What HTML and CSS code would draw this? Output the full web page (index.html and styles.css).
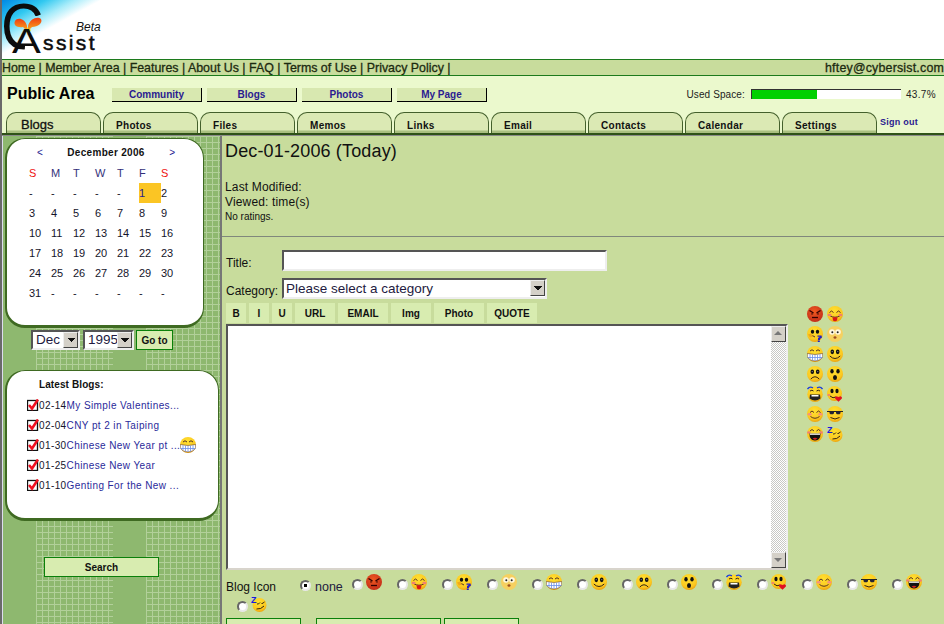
FILE: index.html
```html
<!DOCTYPE html>
<html lang="en">
<head>
    <meta charset="UTF-8">
    <meta name="viewport" content="width=device-width, initial-scale=1.0">
    <title>Assist - Blogs</title>
    <link rel="stylesheet" href="styles.css">
</head>
<body>
    <!-- smiley set, reused all over the page -->
    <svg class="defs" width="0" height="0" aria-hidden="true">
        <defs>
            <radialGradient id="skin" cx="45%" cy="30%" r="75%">
                <stop offset="0" stop-color="#ffe030"/>
                <stop offset=".7" stop-color="#fbc820"/>
                <stop offset="1" stop-color="#e89808"/>
            </radialGradient>
            <radialGradient id="skinRed" cx="45%" cy="35%" r="70%">
                <stop offset="0" stop-color="#f05a20"/>
                <stop offset="1" stop-color="#c02a18"/>
            </radialGradient>
            <symbol id="s-angry" viewBox="0 0 16 16">
                <circle cx="8" cy="8" r="8" fill="url(#skinRed)"/>
                <path d="M2.500 4.500l4 2.500M13.500 4.500l-4 2.500" stroke="#300" stroke-width="1.400" fill="none"/>
                <path d="M4.500 7l2 1-2 .8zM11.500 7l-2 1 2 .8z" fill="#200"/>
                <path d="M5 11.500h6" stroke="#300" stroke-width="1.300"/>
            </symbol>
            <symbol id="s-tongue" viewBox="0 0 16 16">
                <circle cx="8" cy="8" r="8" fill="url(#skin)"/>
                <path d="M2.500 6.500q2-3 4 0M9.500 6.500q2-3 4 0" stroke="#532" fill="none"/>
                <path d="M2.500 9.500q5.500 3.500 11 0" stroke="#532" fill="none"/>
                <ellipse cx="2.600" cy="9" rx="2" ry="1.300" fill="#f08070"/>
                <ellipse cx="13.400" cy="9" rx="2" ry="1.300" fill="#f08070"/>
                <path d="M5.500 11.200h5l-.5 3.300q-2 1.400-4 0z" fill="#d81818"/>
            </symbol>
            <symbol id="s-question" viewBox="0 0 16 16">
                <circle cx="8" cy="8" r="8" fill="url(#skin)"/>
                <ellipse cx="5.500" cy="5.800" rx="1.700" ry="2" fill="#111"/>
                <ellipse cx="10.500" cy="5.800" rx="1.700" ry="2" fill="#111"/>
                <path d="M3 10q3-1 5 1" stroke="#532" fill="none"/>
                <path d="M1 8.500l3-1 2 3-3 1z" fill="#f0a818"/>
                <path d="M10.500 9.500h4l.5 2-2 1.500v1h-2v-2l2-1.300h-2.500z M10.800 14.500h2v1.500h-2z" fill="#2020c8"/>
            </symbol>
            <symbol id="s-shock" viewBox="0 0 16 16">
                <circle cx="8" cy="8" r="8" fill="#f6d060"/>
                <circle cx="5" cy="6" r="2.800" fill="#fff8e0"/>
                <circle cx="11" cy="6" r="2.800" fill="#fff8e0"/>
                <circle cx="5.300" cy="6.300" r="1" fill="#222"/>
                <circle cx="10.700" cy="6.300" r="1" fill="#222"/>
                <ellipse cx="8" cy="11.500" rx="1.500" ry="1.200" fill="#a05020"/>
            </symbol>
            <symbol id="s-grin" viewBox="0 0 16 16">
                <circle cx="8" cy="8" r="8" fill="url(#skin)"/>
                <path d="M3 5q2-2.500 4 0M9 5q2-2.500 4 0" stroke="#532" fill="none"/>
                <path d="M.3 7.500q7.700 2 15.400 0v3q-1.500 4-7.700 4.500-6.200-.5-7.700-4.500z" fill="#fff" stroke="#643" stroke-width=".6"/>
                <path d="M3 8.200v5M5.500 8.700v5.800M8 9v6M10.500 8.700v5.800M13 8.200v5M.6 11.500h14.800" stroke="#6a8ee8" stroke-width=".8"/>
            </symbol>
            <symbol id="s-smile" viewBox="0 0 16 16">
                <circle cx="8" cy="8" r="8" fill="url(#skin)"/>
                <ellipse cx="5.300" cy="5.800" rx="1.800" ry="2.400" fill="#111"/>
                <ellipse cx="10.700" cy="5.800" rx="1.800" ry="2.400" fill="#111"/>
                <path d="M4.600 5.600h1.400M10 5.600h1.400" stroke="#889" stroke-width=".8"/>
                <path d="M2.800 10q5.200 5 10.400 0" stroke="#321" stroke-width="1" fill="none"/>
            </symbol>
            <symbol id="s-sad" viewBox="0 0 16 16">
                <circle cx="8" cy="8" r="8" fill="url(#skin)"/>
                <ellipse cx="5.300" cy="5.800" rx="1.800" ry="2.300" fill="#111"/>
                <ellipse cx="10.700" cy="5.800" rx="1.800" ry="2.300" fill="#111"/>
                <path d="M4.600 5.600h1.400M10 5.600h1.400" stroke="#889" stroke-width=".8"/>
                <path d="M3.800 13q4.200-4.500 8.400 0" stroke="#321" stroke-width="1" fill="none"/>
            </symbol>
            <symbol id="s-wow" viewBox="0 0 16 16">
                <circle cx="8" cy="8" r="8" fill="url(#skin)"/>
                <ellipse cx="5" cy="5.300" rx="1.700" ry="2.300" fill="#111"/>
                <ellipse cx="11" cy="5.300" rx="1.700" ry="2.300" fill="#111"/>
                <ellipse cx="8" cy="11.500" rx="2" ry="2.500" fill="#111"/>
            </symbol>
            <symbol id="s-cry" viewBox="0 0 16 16">
                <circle cx="8" cy="8.300" r="7.700" fill="url(#skin)"/>
                <path d="M.5 3q2-3 5.500-1.200M15.500 3q-2-3-5.500-1.200" stroke="#2040d8" stroke-width="1.400" fill="none"/>
                <path d="M3 5q2-1.500 3.500 0M9.500 5q2-1.500 3.500 0" stroke="#321" fill="none"/>
                <path d="M3 8.500h10l.5 4q-5.500 4-11 0z" fill="#222"/>
                <path d="M4.500 9h7v1.500h-7z" fill="#fff"/>
            </symbol>
            <symbol id="s-kiss" viewBox="0 0 16 16">
                <circle cx="7.500" cy="7.500" r="7.500" fill="url(#skin)"/>
                <ellipse cx="5" cy="5" rx="1.600" ry="2.200" fill="#111"/>
                <ellipse cx="10" cy="5" rx="1.600" ry="2.200" fill="#111"/>
                <path d="M3 10q3 3 6 1" stroke="#321" fill="none"/>
                <ellipse cx="1.800" cy="9" rx="1.500" ry="1" fill="#f08070"/>
                <path d="M11.500 15.800l-3.400-3.300q-.6-2 1.400-2.300l2 .8 2-.8q2 .3 1.400 2.300z" fill="#e01020"/>
            </symbol>
            <symbol id="s-blush" viewBox="0 0 16 16">
                <circle cx="8" cy="8" r="8" fill="url(#skin)"/>
                <path d="M3 6.500q2-3 4 0M9.500 6.500q2-3 4 0" stroke="#532" fill="none"/>
                <ellipse cx="2.600" cy="8.200" rx="2" ry="1.300" fill="#f59080"/>
                <ellipse cx="13.400" cy="8.200" rx="2" ry="1.300" fill="#f59080"/>
                <path d="M3.500 10.500q4.500 3.500 9 0" stroke="#532" fill="none"/>
            </symbol>
            <symbol id="s-cool" viewBox="0 0 16 16">
                <circle cx="8" cy="8" r="8" fill="url(#skin)"/>
                <path d="M0 5.500h16" stroke="#222" stroke-width="1"/>
                <path d="M2.500 5.500h4.500v1.800l-1 1h-2.500l-1-1zM9 5.500h4.500v1.800l-1 1h-2.500l-1-1z" fill="#223"/>
                <path d="M3.500 11.500q4.500 3 9 0" stroke="#321" fill="none"/>
            </symbol>
            <symbol id="s-laugh" viewBox="0 0 16 16">
                <circle cx="8" cy="8" r="8" fill="url(#skin)"/>
                <path d="M3 5q2-3 4 0M9.500 5q2-3 4 0" stroke="#532" fill="none"/>
                <ellipse cx="1.800" cy="6.500" rx="1.700" ry="1.200" fill="#f08070"/>
                <ellipse cx="14.200" cy="6.500" rx="1.700" ry="1.200" fill="#f08070"/>
                <path d="M2.500 7.500h11l-.3 3.500q-1.700 3.500-5.200 3.500t-5.200-3.500z" fill="#111"/>
                <path d="M3 7.500h10v1.300h-10z" fill="#fff"/>
                <path d="M5.500 12.500q2.500-1.500 5 0l-2.500 1.500z" fill="#d02020"/>
            </symbol>
            <symbol id="s-sleep" viewBox="0 0 16 16">
                <circle cx="8.500" cy="9" r="7" fill="url(#skin)"/>
                <path d="M6 8q1.800 .5 3-1.500M10.500 7.500q1.800 .3 3-1.800M5.500 13q4.500 .5 7.500-3" stroke="#321" fill="none"/>
                <text x="0" y="7" class="zed">Z</text>
            </symbol>
        </defs>
    </svg>

    <div class="page">
        <header class="top">
            <svg class="logo" width="108" height="59" viewBox="0 0 108 59" role="img" aria-label="Assist Beta">
                <defs>
                    <linearGradient id="sky" x1="0" y1="0" x2="1" y2="1">
                        <stop offset="0" stop-color="#0088e4"/>
                        <stop offset=".2" stop-color="#30c8f0"/>
                        <stop offset=".34" stop-color="#a8ecfa"/>
                        <stop offset=".46" stop-color="#fff"/>
                    </linearGradient>
                    <linearGradient id="wing" x1="0" y1="0" x2="0" y2="1">
                        <stop offset="0" stop-color="#ee3a10"/>
                        <stop offset="1" stop-color="#fbb020"/>
                    </linearGradient>
                    <clipPath id="openC">
                        <path d="M0 0H50V16H24V34L22 59H0z"/>
                    </clipPath>
                </defs>
                <rect x="0" y="0" width="108" height="59" fill="url(#sky)"/>
                <path d="M23 30l3-3 3 3-3 5z" fill="#f8e020"/>
                <path d="M25 31l-4-4c-6 1-10-2-8-6 2-4 10-3 12 5z" fill="url(#wing)"/>
                <path d="M26 31l4-4c6 0 11-4 9-8-3-3-11-1-13 7z" fill="url(#wing)"/>
                <g clip-path="url(#openC)">
                    <text class="logo-c" transform="translate(-1 49) scale(.92 1)">C</text>
                </g>
                <text class="logo-a" transform="translate(10 53) scale(1.2 1)">A</text>
                <text class="logo-rest" x="41" y="50">ssist</text>
                <text class="logo-beta" x="74" y="31">Beta</text>
            </svg>
        </header>

        <nav class="site-nav">
            <span>Home | Member Area | Features | About Us | FAQ | Terms of Use | Privacy Policy |</span>
            <span class="user-mail">hftey@cybersist.com</span>
        </nav>

        <div class="area-bar">
            <h1>Public Area</h1>
            <a class="area-link" href="#">Community</a>
            <a class="area-link" href="#">Blogs</a>
            <a class="area-link" href="#">Photos</a>
            <a class="area-link" href="#">My Page</a>
            <div class="space">
                <span class="space-label">Used Space:</span>
                <div class="space-bar"><div class="space-fill" style="width: 43.7%"></div></div>
                <span class="space-pct">43.7%</span>
            </div>
        </div>

        <div class="tabs">
            <a class="tab tab-active" href="#">Blogs</a>
            <a class="tab" href="#">Photos</a>
            <a class="tab" href="#">Files</a>
            <a class="tab" href="#">Memos</a>
            <a class="tab" href="#">Links</a>
            <a class="tab" href="#">Email</a>
            <a class="tab" href="#">Contacts</a>
            <a class="tab" href="#">Calendar</a>
            <a class="tab" href="#">Settings</a>
            <a class="signout" href="#">Sign out</a>
        </div>

        <div class="columns">
            <aside class="sidebar">
                <section class="card calendar">
                    <div class="cal-head">
                        <span>&lt;</span>
                        <strong>December 2006</strong>
                        <span>&gt;</span>
                    </div>
                    <div class="cal-grid">
                        <span class="dow red">S</span><span class="dow">M</span><span class="dow">T</span><span class="dow">W</span><span class="dow">T</span><span class="dow">F</span><span class="dow red">S</span>
                        <span>-</span><span>-</span><span>-</span><span>-</span><span>-</span><span class="today">1</span><span>2</span>
                        <span>3</span><span>4</span><span>5</span><span>6</span><span>7</span><span>8</span><span>9</span>
                        <span>10</span><span>11</span><span>12</span><span>13</span><span>14</span><span>15</span><span>16</span>
                        <span>17</span><span>18</span><span>19</span><span>20</span><span>21</span><span>22</span><span>23</span>
                        <span>24</span><span>25</span><span>26</span><span>27</span><span>28</span><span>29</span><span>30</span>
                        <span>31</span><span>-</span><span>-</span><span>-</span><span>-</span><span>-</span><span>-</span>
                    </div>
                </section>

                <form class="goto">
                    <span class="combo combo-month"><select><option>Dec</option></select></span>
                    <span class="combo combo-year"><select><option>1995</option></select></span>
                    <button class="btn goto-btn" type="button">Go to</button>
                </form>

                <section class="card latest">
                    <h3>Latest Blogs:</h3>
                    <ul>
                        <li><svg class="check" viewBox="0 0 12 12"><rect x=".5" y="1.500" width="10" height="10" fill="#fff" stroke="#111" stroke-width="1.300"/><path d="M2 6l3 3.500 6-9" stroke="#f01020" stroke-width="2.600" fill="none"/></svg><span class="date">02-14</span><a href="#">My Simple Valentines...</a></li>
                        <li><svg class="check" viewBox="0 0 12 12"><rect x=".5" y="1.500" width="10" height="10" fill="#fff" stroke="#111" stroke-width="1.300"/><path d="M2 6l3 3.500 6-9" stroke="#f01020" stroke-width="2.600" fill="none"/></svg><span class="date">02-04</span><a href="#">CNY pt 2 in Taiping</a></li>
                        <li><svg class="check" viewBox="0 0 12 12"><rect x=".5" y="1.500" width="10" height="10" fill="#fff" stroke="#111" stroke-width="1.300"/><path d="M2 6l3 3.500 6-9" stroke="#f01020" stroke-width="2.600" fill="none"/></svg><span class="date">01-30</span><a href="#">Chinese New Year pt ...</a><svg class="smile"><use href="#s-grin"/></svg></li>
                        <li><svg class="check" viewBox="0 0 12 12"><rect x=".5" y="1.500" width="10" height="10" fill="#fff" stroke="#111" stroke-width="1.300"/><path d="M2 6l3 3.500 6-9" stroke="#f01020" stroke-width="2.600" fill="none"/></svg><span class="date">01-25</span><a href="#">Chinese New Year</a></li>
                        <li><svg class="check" viewBox="0 0 12 12"><rect x=".5" y="1.500" width="10" height="10" fill="#fff" stroke="#111" stroke-width="1.300"/><path d="M2 6l3 3.500 6-9" stroke="#f01020" stroke-width="2.600" fill="none"/></svg><span class="date">01-10</span><a href="#">Genting For the New ...</a></li>
                    </ul>
                </section>

                <button class="btn search-btn" type="button">Search</button>
            </aside>

            <main class="content">
                <div class="entry-info">
                    <h2>Dec-01-2006 (Today)</h2>
                    <p class="meta">Last Modified:<br>Viewed: time(s)</p>
                    <p class="ratings">No ratings.</p>
                </div>

                <form class="entry-form">
                    <div class="field field-title">
                        <label for="title">Title:</label>
                        <input id="title" type="text">
                    </div>
                    <div class="field field-cat">
                        <label for="category">Category:</label>
                        <span class="combo combo-cat"><select id="category"><option>Please select a category</option></select></span>
                    </div>

                    <div class="toolbar">
                        <button type="button" class="tool tool-s">B</button>
                        <button type="button" class="tool tool-s">I</button>
                        <button type="button" class="tool tool-s">U</button>
                        <button type="button" class="tool">URL</button>
                        <button type="button" class="tool tool-l">EMAIL</button>
                        <button type="button" class="tool">Img</button>
                        <button type="button" class="tool tool-l">Photo</button>
                        <button type="button" class="tool tool-l">QUOTE</button>
                    </div>

                    <div class="editor-row">
                        <div class="editor">
                            <textarea aria-label="Blog text"></textarea>
                            <div class="scrollbar">
                                <span class="scroll-btn scroll-up"></span>
                                <span class="scroll-track"></span>
                                <span class="scroll-btn scroll-down"></span>
                            </div>
                        </div>
                        <div class="smileys">
                            <svg class="smile"><use href="#s-angry"/></svg><svg class="smile"><use href="#s-tongue"/></svg>
                            <svg class="smile"><use href="#s-question"/></svg><svg class="smile"><use href="#s-shock"/></svg>
                            <svg class="smile"><use href="#s-grin"/></svg><svg class="smile"><use href="#s-smile"/></svg>
                            <svg class="smile"><use href="#s-sad"/></svg><svg class="smile"><use href="#s-wow"/></svg>
                            <svg class="smile"><use href="#s-cry"/></svg><svg class="smile"><use href="#s-kiss"/></svg>
                            <svg class="smile"><use href="#s-blush"/></svg><svg class="smile"><use href="#s-cool"/></svg>
                            <svg class="smile"><use href="#s-laugh"/></svg><svg class="smile"><use href="#s-sleep"/></svg>
                        </div>
                    </div>

                    <div class="icon-pick">
                        <span class="icon-label">Blog Icon</span>
                        <label class="pick pick-none"><input type="radio" name="icon" checked> none</label>
                        <label class="pick"><input type="radio" name="icon"><svg class="smile"><use href="#s-angry"/></svg></label>
                        <label class="pick"><input type="radio" name="icon"><svg class="smile"><use href="#s-tongue"/></svg></label>
                        <label class="pick"><input type="radio" name="icon"><svg class="smile"><use href="#s-question"/></svg></label>
                        <label class="pick"><input type="radio" name="icon"><svg class="smile"><use href="#s-shock"/></svg></label>
                        <label class="pick"><input type="radio" name="icon"><svg class="smile"><use href="#s-grin"/></svg></label>
                        <label class="pick"><input type="radio" name="icon"><svg class="smile"><use href="#s-smile"/></svg></label>
                        <label class="pick"><input type="radio" name="icon"><svg class="smile"><use href="#s-sad"/></svg></label>
                        <label class="pick"><input type="radio" name="icon"><svg class="smile"><use href="#s-wow"/></svg></label>
                        <label class="pick"><input type="radio" name="icon"><svg class="smile"><use href="#s-cry"/></svg></label>
                        <label class="pick"><input type="radio" name="icon"><svg class="smile"><use href="#s-kiss"/></svg></label>
                        <label class="pick"><input type="radio" name="icon"><svg class="smile"><use href="#s-blush"/></svg></label>
                        <label class="pick"><input type="radio" name="icon"><svg class="smile"><use href="#s-cool"/></svg></label>
                        <label class="pick"><input type="radio" name="icon"><svg class="smile"><use href="#s-laugh"/></svg></label>
                        <label class="pick pick-wrap"><input type="radio" name="icon"><svg class="smile"><use href="#s-sleep"/></svg></label>
                    </div>

                    <div class="actions">
                        <button class="btn action-a" type="button"></button>
                        <button class="btn action-b" type="button"></button>
                        <button class="btn action-c" type="button"></button>
                    </div>
                </form>
            </main>
        </div>
    </div>
</body>
</html>
```

FILE: styles.css
```css
html, body {
    margin: 0;
    height: 624px;
    overflow: hidden;
}

body {
    font-family: "Liberation Sans", Arial, sans-serif;
    font-size: 12px;
    color: #111;
    background-color: #FFFFFF;
}

a {
    text-decoration: none;
}

.defs {
    position: absolute;
}

.page {
    border-left: 2px solid #6a6a6a;
    height: 624px;
    box-sizing: border-box;
}

/* top logo */
.top {
    height: 59px;
    background-color: #FFFFFF;
}

.logo {
    display: block;
}

.logo-c {
    font-family: "Liberation Sans", sans-serif;
    font-size: 64px;
    fill: #0c0c0c;
}

.logo-a {
    font-family: "Liberation Sans", sans-serif;
    font-size: 36px;
    fill: #0c0c0c;
}

.logo-rest {
    font-family: "Liberation Sans", sans-serif;
    font-size: 21px;
    letter-spacing: 2.400px;
    fill: #0c0c0c;
    stroke: #0c0c0c;
    stroke-width: .5px;
}

.logo-beta {
    font-family: "Liberation Sans", sans-serif;
    font-size: 12px;
    font-style: italic;
    fill: #111;
}

.zed {
    font-family: "Liberation Sans", sans-serif;
    font-size: 9px;
    font-weight: bold;
    fill: #1818e0;
}

/* link bar */
.site-nav {
    display: flex;
    justify-content: space-between;
    height: 15px;
    line-height: 16px;
    white-space: nowrap;
    overflow: hidden;
    background-color: #c8dc9c;
    border-top: 1px solid #1c7a1c;
    border-bottom: 1px solid #1c7a1c;
    font-size: 12.400px;
    -webkit-text-stroke: .3px #1c2a10;
    color: #1c2a10;
}

.user-mail {
    letter-spacing: .2px;
}

/* public area */
.area-bar {
    display: flex;
    align-items: center;
    height: 36px;
    background-color: #ebf9cd;
}

.area-bar h1 {
    margin: 0 0 0 5px;
    width: 105px;
    font-size: 16px;
    color: #000;
}

.area-link {
    width: 89px;
    height: 13px;
    line-height: 13px;
    margin-right: 5px;
    margin-top: 1px;
    text-align: center;
    font-size: 10px;
    font-weight: bold;
    color: #2a1a90;
    background-color: #d8e8b0;
    border-right: 1px solid #000;
    border-bottom: 1px solid #000;
}

.space {
    display: flex;
    align-items: center;
    margin-left: auto;
    margin-right: 8px;
}

.space-label,
.space-pct {
    font-size: 10px;
    color: #222;
}

.space-label {
    letter-spacing: .1px;
}

.space-pct {
    letter-spacing: .35px;
}

.space-bar {
    width: 149px;
    height: 9px;
    margin: 0 5px 0 6px;
    background-color: #FFFFFF;
    border-left: 1px solid #333;
    border-top: 1px solid #333;
}

.space-fill {
    height: 100%;
    background-color: #00d000;
}

/* tabs */
.tabs {
    display: flex;
    gap: 2px;
    height: 21px;
    padding-left: 4px;
    background-color: #ebf9cd;
    border-bottom: 2px solid #2f5218;
}

.tab {
    box-sizing: border-box;
    width: 95px;
    height: 21px;
    padding: 7px 0 0 12px;
    font-size: 10px;
    font-weight: bold;
    letter-spacing: .3px;
    color: #111;
    background: linear-gradient(#dbe9b4 0, #dbe9b4 17px, #a9bf80 18px);
    border: 1px solid #44602c;
    border-bottom: 0;
    border-radius: 10px 10px 0 0;
}

.tab-active {
    padding: 4px 0 0 14px;
    font-size: 13px;
    font-weight: normal;
    -webkit-text-stroke: .3px #111;
    letter-spacing: 0;
}

.signout {
    margin: 5px 0 0 1px;
    font-size: 9px;
    font-weight: bold;
    letter-spacing: .25px;
    color: #2a1a90;
}

/* columns */
.columns {
    display: flex;
    height: 489px;
    border-top: 1px solid #8a8a8a;
}

.sidebar {
    box-sizing: border-box;
    flex: none;
    width: 220px;
    padding: 2px 0 0 2px;
    border-left: 1px solid #dde;
    border-right: 2px solid #777;
    background-color: #8eb86f;
    background-image:
        repeating-linear-gradient(90deg, #b2d09a 0, #b2d09a 1px, transparent 1px, transparent 6px),
        repeating-linear-gradient(#b2d09a 0, #b2d09a 1px, transparent 1px, transparent 6px),
        repeating-linear-gradient(90deg, #b2d09a 0, #b2d09a 1px, transparent 1px, transparent 6px),
        repeating-linear-gradient(#b2d09a 0, #b2d09a 1px, transparent 1px, transparent 6px);
    background-repeat: no-repeat;
    background-size: 77px 100%, 77px 100%, 74px 100%, 74px 100%;
    background-position: 33px 0, 33px 0, 143px 0, 143px 0;
}

.card {
    box-sizing: border-box;
    background-color: #FFFFFF;
    border: 1px solid #3f6a22;
    border-left-width: 2px;
    border-bottom-width: 3px;
    border-radius: 20px;
}

.calendar {
    width: 199px;
    height: 190px;
}

.cal-head {
    display: flex;
    justify-content: space-between;
    width: 138px;
    margin: 8px 0 0 30px;
    font-size: 10px;
    line-height: 12px;
    color: #221a90;
}

.cal-head strong {
    letter-spacing: .3px;
    color: #111;
}

.cal-grid {
    display: grid;
    grid-template-columns: repeat(7, 22px);
    grid-auto-rows: 20px;
    margin: 4px 0 0 22px;
    font-size: 11px;
    line-height: 20px;
    color: #14142a;
}

.dow {
    color: #33307a;
}

.cal-grid .red {
    color: #ee1111;
}

.cal-grid .today {
    color: #2a1a90;
    background-color: #fbc524;
}

.goto {
    display: flex;
    gap: 3px;
    margin: 2px 0 0 26px;
}

.combo {
    position: relative;
    display: inline-block;
    box-sizing: border-box;
    height: 20px;
    background-color: #FFFFFF;
    border: 2px solid;
    border-color: #555 #eee #eee #555;
}

.combo select {
    display: block;
    width: 100%;
    height: 16px;
    padding: 0 0 0 3px;
    border: 0;
    outline: 0;
    appearance: none;
    background: transparent;
    font-family: "Liberation Sans", sans-serif;
    font-size: 13.500px;
    line-height: 16px;
    color: #221a40;
}

.combo::after {
    content: "";
    position: absolute;
    top: 0;
    right: 0;
    box-sizing: border-box;
    width: 15px;
    height: 16px;
    background-color: #d4d0c8;
    background-image: linear-gradient(45deg, transparent 50%, #111 50%), linear-gradient(315deg, transparent 50%, #111 50%);
    background-repeat: no-repeat;
    background-size: 4px 4px, 4px 4px;
    background-position: 3px 5px, 7px 5px;
    border: 1px solid;
    border-color: #eee #444 #444 #eee;
    pointer-events: none;
}

.combo-month {
    width: 49px;
}

.combo-year {
    width: 51px;
}

.combo-cat {
    width: 265px;
    height: 21px;
}

.combo-cat select {
    height: 17px;
    padding-left: 2px;
}

.btn {
    padding: 0;
    font-family: "Liberation Sans", sans-serif;
    font-size: 10px;
    font-weight: bold;
    color: #111;
    background-color: #d8ecb0;
    border: 1px solid #0a800a;
}

.goto-btn {
    width: 37px;
    height: 20px;
    margin-left: -1px;
}

.latest {
    width: 214px;
    height: 151px;
    margin-top: 20px;
}

.latest h3 {
    margin: 8px 0 0 32px;
    font-size: 10px;
    line-height: 12px;
    letter-spacing: .1px;
    color: #111;
}

.latest ul {
    list-style: none;
    margin: 4px 0 0 20px;
    padding: 0;
}

.latest li {
    display: flex;
    align-items: center;
    height: 20px;
    font-size: 10px;
    letter-spacing: .4px;
    white-space: nowrap;
}

.check {
    flex: none;
    width: 12px;
    height: 12px;
}

.latest .date {
    color: #14142a;
}

.latest a {
    color: #2a2a9a;
}

.smile {
    flex: none;
    width: 16px;
    height: 16px;
}

.search-btn {
    display: block;
    width: 115px;
    height: 20px;
    margin: 36px 0 0 39px;
}

/* main column */
.content {
    flex: 1;
    min-width: 0;
    background-color: #c8dc9c;
}

.entry-info {
    box-sizing: border-box;
    height: 101px;
    padding: 5px 0 0 3px;
    border-bottom: 1px solid #80887c;
}

.entry-info h2 {
    margin: 0;
    font-size: 18px;
    line-height: 20px;
    font-weight: normal;
    letter-spacing: .15px;
    color: #111;
}

.meta {
    margin: 19px 0 0;
    font-size: 12px;
    line-height: 15px;
    letter-spacing: .15px;
}

.ratings {
    margin: 1px 0 0;
    font-size: 10px;
    line-height: 12px;
}

.entry-form {
    padding-left: 4px;
}

.field {
    display: flex;
    align-items: center;
}

.field label {
    width: 56px;
    font-size: 12px;
}

.field-title {
    margin-top: 13px;
}

.field-title label {
    padding-top: 5px;
}

.field-cat label {
    padding-top: 4px;
}

.field-title input {
    box-sizing: border-box;
    width: 325px;
    height: 21px;
    border: 2px solid;
    border-color: #555 #eee #eee #555;
    outline: 0;
    padding: 0;
}

.field-cat {
    margin-top: 7px;
}

.toolbar {
    display: flex;
    gap: 3px;
    margin-top: 4px;
}

.tool {
    box-sizing: border-box;
    width: 40px;
    height: 20px;
    padding: 0;
    border: 0;
    font-family: "Liberation Sans", sans-serif;
    font-size: 10px;
    font-weight: bold;
    color: #111;
    background-color: #d8ecb0;
}

.tool-s {
    width: 20px;
}

.tool-l {
    width: 50px;
}

.editor-row {
    display: flex;
}

.editor {
    display: flex;
    box-sizing: border-box;
    width: 562px;
    height: 246px;
    margin-top: 1px;
    background-color: #FFFFFF;
    border: 2px solid;
    border-color: #555 #eee #d8d4cc #555;
}

.editor textarea {
    flex: 1;
    border: 0;
    outline: 0;
    resize: none;
    padding: 0;
}

.scrollbar {
    display: flex;
    flex-direction: column;
    width: 15px;
}

.scroll-btn {
    position: relative;
    box-sizing: border-box;
    height: 16px;
    background-color: #d4d0c8;
    border: 1px solid;
    border-color: #eee #444 #444 #eee;
}

.scroll-btn::after {
    content: "";
    position: absolute;
    left: 2px;
    width: 0;
    height: 0;
    border-left: 4px solid transparent;
    border-right: 4px solid transparent;
}

.scroll-up::after {
    top: 4px;
    border-bottom: 4px solid #777;
}

.scroll-down::after {
    top: 5px;
    border-top: 4px solid #777;
}

.scroll-track {
    flex: 1;
    background-color: #eeeeea;
    background-image: repeating-conic-gradient(#c8c8c4 0 25%, #fff 0 50%);
    background-size: 2px 2px;
}

.smileys {
    display: grid;
    grid-template-columns: repeat(2, 16px);
    grid-auto-rows: 16px;
    gap: 4px;
    margin: -17px 0 0 19px;
    height: 136px;
}

.icon-pick {
    display: flex;
    flex-wrap: wrap;
    align-items: flex-start;
    height: 44px;
    margin-top: 4px;
    padding-right: 2px;
}

.icon-label {
    width: 74px;
    margin-top: 6px;
    font-size: 12px;
}

.pick {
    display: flex;
    align-items: flex-start;
    width: 45px;
    height: 20px;
}

.pick-none {
    width: 52px;
    margin-top: 6px;
    height: 14px;
    font-size: 12.500px;
    color: #221a40;
    white-space: nowrap;
    gap: 4px;
}

.pick input {
    flex: none;
    appearance: none;
    box-sizing: border-box;
    width: 11px;
    height: 11px;
    margin: 5px 3px 0 0;
    border-radius: 50%;
    background-color: #FFFFFF;
    border: 2px solid;
    border-color: #666 #e8e8e8 #e8e8e8 #666;
}

.pick-none input {
    margin: 0;
}

.pick input:checked {
    background-image: radial-gradient(circle, #000 0, #000 1.500px, #fff 2px);
}

.pick-wrap {
    margin-left: 11px;
}

.actions {
    display: flex;
}

.actions .btn {
    height: 20px;
    background-color: #d8ecb0;
}

.action-a {
    width: 75px;
}

.action-b {
    width: 125px;
    margin-left: 15px;
}

.action-c {
    width: 75px;
    margin-left: 3px;
}
```
